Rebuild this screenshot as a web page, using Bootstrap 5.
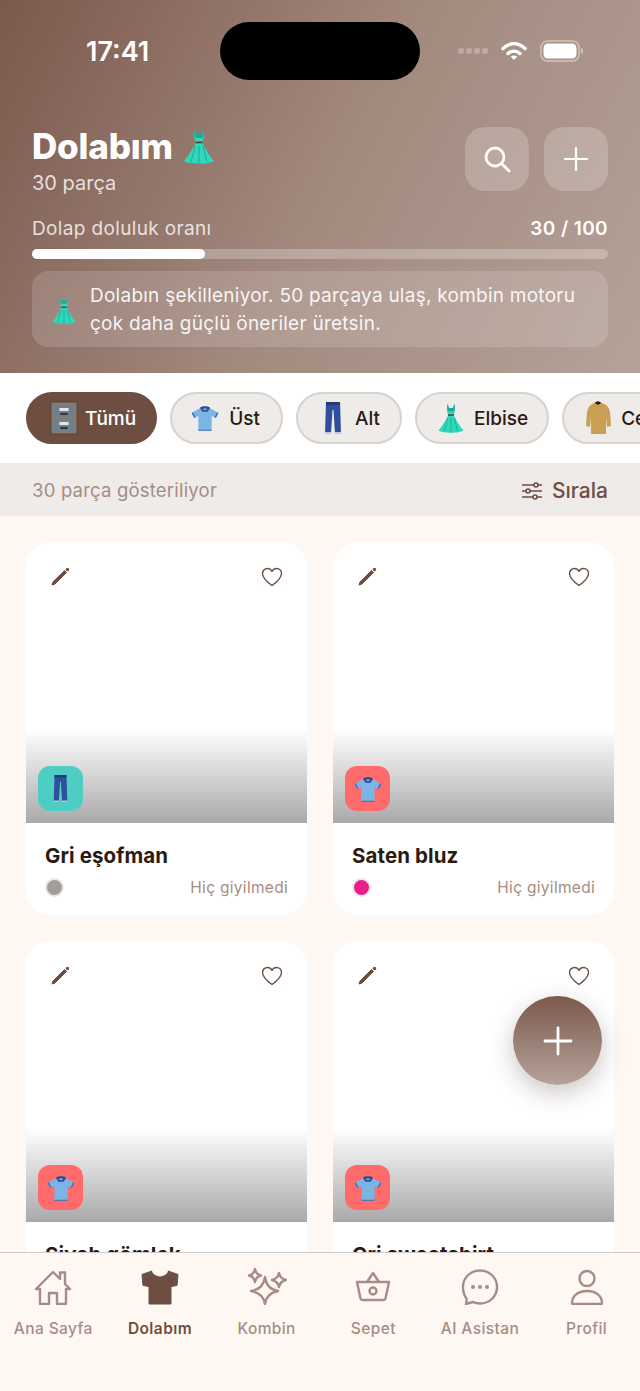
<!DOCTYPE html>
<html lang="tr">
<head>
  <meta charset="UTF-8" />
  <meta name="viewport" content="width=device-width, initial-scale=1.0" />
  <title>Dolabım</title>
  <link href="https://cdn.jsdelivr.net/npm/bootstrap@5.3.3/dist/css/bootstrap.min.css" rel="stylesheet" />
  <style>
    :root {
      --brown: #6f4e42;
      --brown-soft: #a58d84;
      --ink: #2c1a12;
      --cream: #fff8f2;
      --stone: #eeebe8;
    }
    html, body { height: 100%; }
    body { background: var(--cream); font-family: Inter, "Noto Sans", sans-serif; color: var(--ink); }
    .app { width: 640px; height: 1391px; overflow: hidden; }

    /* üst alan */
    .hero { height: 373px; flex: none; padding: 22px 32px 0; color: #fff; background: linear-gradient(118deg, #7c594d 0%, #a38a7f 52%, #b5a299 100%); }
    .status-row { height: 58px; margin: 0 -32px 47px; }
    .clock { width: 220px; padding-left: 86px; font-size: 27px; font-weight: 600; line-height: 1; }
    .island { width: 200px; height: 58px; background: #000; border-radius: 29px; }
    .status-right { flex: 1; padding-right: 56px; gap: 12px; }
    .signal { gap: 2px; }
    .signal i { width: 6px; height: 6px; border-radius: 2px; background: rgba(255,255,255,.25); display: block; }
    .title-row { height: 74px; margin-bottom: 16px; }
    .page-title { font-size: 35px; font-weight: 800; line-height: 40px; letter-spacing: -.2px; margin-top: -1px; }
    .page-sub { font-size: 20px; line-height: 24px; color: rgba(255,255,255,.8); margin-top: 5px; }
    .head-actions { gap: 15px; }
    .glass-btn { width: 64px; height: 64px; border: 0; border-radius: 20px; background: rgba(255,255,255,.2); }
    .fill-label { font-size: 19px; line-height: 24px; color: rgba(255,255,255,.8); letter-spacing: .35px; }
    .fill-count { font-size: 19px; font-weight: 600; line-height: 24px; letter-spacing: .4px; }
    .fill-track { height: 10px; margin: 8px 0 12px; border-radius: 5px; background: rgba(255,255,255,.25); }
    .fill-value { height: 100%; border-radius: 5px; background: #fff; }
    .tip-box { height: 76px; padding: 2px 24px 0 18px; gap: 12px; border-radius: 16px; background: rgba(255,255,255,.15); font-size: 19px; line-height: 28px; color: rgba(255,255,255,.92); letter-spacing: .25px; }

    /* kategori filtreleri */
    .chip-strip { height: 90px; flex: none; padding: 19px 0 0 26px; gap: 13px; background: #fff; overflow: hidden; }
    .chip { height: 52px; flex: none; border: 2px solid #d6d2ce; border-radius: 26px; background: var(--stone); font-size: 19px; font-weight: 500; color: var(--ink); }
    .chip span { margin-top: 3px; }
    .chip-all { padding: 0 19px 0 22px; gap: 7px; border-color: var(--brown); background: var(--brown); color: #fff; }
    .chip-top { padding: 0 21px 0 18px; gap: 9px; }
    .chip-bottom { padding: 0 20px 0 25px; gap: 12px; }
    .chip-dress { padding: 0 19px; gap: 8px; }
    .chip-coat { padding: 0 20px 0 21px; gap: 10px; }
    .count-bar { height: 53px; flex: none; padding: 3px 32px 0; background: var(--stone); }
    .count-text { font-size: 18.500px; color: var(--brown-soft); letter-spacing: .2px; }
    .sort-text { font-size: 21px; font-weight: 500; color: var(--brown); gap: 9px; }

    /* parça kartları */
    .wardrobe { flex: 1; min-height: 0; overflow: hidden; padding: 26px 26px 0; background: var(--cream); }
    .piece-grid { display: grid; grid-template-columns: 281px 281px; gap: 26px; }
    .piece { height: 373px; background: #fff; border-radius: 26px; overflow: hidden; }
    .piece-photo { height: 281px; padding: 24px 24px 0 23px; background: linear-gradient(to bottom, #fff 0, #fff 187px, #a9a9a9 281px); }
    .piece-tools { height: 22px; }
    .type-tag { position: absolute; left: 12px; bottom: 12px; width: 45px; height: 45px; border-radius: 12px; }
    .tag-teal { background: #4ecdc4; }
    .tag-coral { background: #ff6b6b; }
    .piece-name { font-size: 20.500px; font-weight: 700; line-height: 26px; padding: 20px 19px 0; letter-spacing: .1px; }
    .piece-meta { padding: 7px 19px 0; font-size: 15.500px; color: var(--brown-soft); letter-spacing: .3px; }
    .swatch { width: 19px; height: 19px; border-radius: 50%; border: 2px solid #e9e6e3; }
    .swatch-grey { background: #a29c9c; }
    .swatch-pink { background: #e91e8c; }
    .fab { position: absolute; left: 513px; top: 996px; width: 89px; height: 89px; border: 0; border-radius: 50%; background: linear-gradient(to bottom, #7c594d, #b5a299); box-shadow: 0 8px 24px rgba(70,50,40,.28); }

    /* alt menü */
    .tabbar { height: 139px; flex: none; padding-top: 15px; background: var(--cream); border-top: 1px solid #cfcbc9; position: relative; }
    .tab { width: calc(100% / 6); color: var(--brown-soft); font-size: 15.500px; font-weight: 500; letter-spacing: .4px; line-height: 20px; gap: 14px; }
    .tab-on { color: var(--brown); font-weight: 600; }
  </style>
</head>
<body>
<div class="app d-flex flex-column position-relative">

  <!-- başlık -->
  <header class="hero">
    <div class="status-row d-flex align-items-center">
      <div class="clock">17:41</div>
      <div class="island"></div>
      <div class="status-right d-flex align-items-center justify-content-end">
        <div class="signal d-flex"><i></i><i></i><i></i><i></i></div>
        <svg width="28" height="22" viewBox="0 0 28 22" fill="none" stroke="#fff" stroke-width="3.400" stroke-linecap="round"><path d="M3 8.500C10 2 18 2 25 8.500"/><path d="M8 13.500C11.500 10.300 16.500 10.300 20 13.500"/><path d="M14 20l-3.400-3.400c2-1.600 4.800-1.600 6.800 0z" fill="#fff" stroke="none"/></svg>
        <svg width="44" height="24" viewBox="0 0 44 24"><rect x="1" y="2" width="38" height="20" rx="6.500" fill="none" stroke="#fff" stroke-opacity=".45" stroke-width="1.500"/><rect x="3.500" y="4.500" width="33" height="15" rx="4.500" fill="#fff"/><path d="M41 9v6c1.400-.5 2-1.600 2-3s-.6-2.500-2-3z" fill="#fff" fill-opacity=".5"/></svg>
      </div>
    </div>

    <div class="title-row d-flex justify-content-between align-items-start">
      <div>
        <div class="page-title d-flex align-items-center gap-2">Dolabım
          <svg width="36" height="40" viewBox="0 0 36 40"><use href="#ic-dress"/></svg>
        </div>
        <div class="page-sub">30 parça</div>
      </div>
      <div class="head-actions d-flex">
        <button class="glass-btn d-flex align-items-center justify-content-center" type="button" aria-label="Ara">
          <svg width="30" height="30" viewBox="0 0 30 30" fill="none" stroke="#fff" stroke-width="2.800" stroke-linecap="round"><circle cx="13" cy="13" r="9"/><path d="M20 20l7 7"/></svg>
        </button>
        <button class="glass-btn d-flex align-items-center justify-content-center" type="button" aria-label="Ekle">
          <svg width="26" height="26" viewBox="0 0 26 26" stroke="#fff" stroke-width="2.200" stroke-linecap="round"><path d="M13 2v22M2 13h22"/></svg>
        </button>
      </div>
    </div>

    <div class="d-flex justify-content-between"><span class="fill-label">Dolap doluluk oranı</span><span class="fill-count">30 / 100</span></div>
    <div class="fill-track"><div class="fill-value" style="width:30%"></div></div>
    <div class="tip-box d-flex align-items-center">
      <svg width="28" height="34" viewBox="0 0 36 40" class="flex-shrink-0"><use href="#ic-dress"/></svg>
      <div>Dolabın şekilleniyor. 50 parçaya ulaş, kombin motoru çok daha güçlü öneriler üretsin.</div>
    </div>
  </header>

  <!-- kategoriler -->
  <div class="chip-strip d-flex">
    <div class="chip chip-all d-flex align-items-center"><svg width="28" height="34" viewBox="0 0 30 34" preserveAspectRatio="none"><use href="#ic-cabinet"/></svg><span>Tümü</span></div>
    <div class="chip chip-top d-flex align-items-center"><svg width="30" height="30" viewBox="0 0 36 36"><use href="#ic-shirt"/></svg><span>Üst</span></div>
    <div class="chip chip-bottom d-flex align-items-center"><svg width="20" height="34" viewBox="0 0 20 34"><use href="#ic-jeans"/></svg><span>Alt</span></div>
    <div class="chip chip-dress d-flex align-items-center"><svg width="30" height="36" viewBox="0 0 36 40"><use href="#ic-dress"/></svg><span>Elbise</span></div>
    <div class="chip chip-coat d-flex align-items-center"><svg width="26" height="36" viewBox="0 0 26 36"><use href="#ic-coat"/></svg><span>Ceket</span></div>
  </div>

  <div class="count-bar d-flex align-items-center justify-content-between">
    <span class="count-text">30 parça gösteriliyor</span>
    <span class="sort-text d-flex align-items-center">
      <svg width="22" height="20" viewBox="0 0 22 20" fill="#eeebe8" stroke="#6f4e42" stroke-width="1.600"><path d="M1 4h20M1 10h20M1 16h20"/><circle cx="15" cy="4" r="2"/><circle cx="7" cy="10" r="2"/><circle cx="14" cy="16" r="2"/></svg>
      Sırala
    </span>
  </div>

  <!-- parçalar -->
  <main class="wardrobe">
    <div class="piece-grid">
      <article class="piece">
        <div class="piece-photo position-relative">
          <div class="piece-tools d-flex justify-content-between">
            <svg width="22" height="22" viewBox="0 0 22 22"><use href="#ic-pen"/></svg>
            <svg width="22" height="22" viewBox="0 0 22 22"><use href="#ic-heart"/></svg>
          </div>
          <div class="type-tag tag-teal d-flex align-items-center justify-content-center"><svg width="17" height="29" viewBox="0 0 20 34"><use href="#ic-jeans"/></svg></div>
        </div>
        <div class="piece-name">Gri eşofman</div>
        <div class="piece-meta d-flex align-items-center justify-content-between"><span class="swatch swatch-grey"></span><span>Hiç giyilmedi</span></div>
      </article>
      <article class="piece">
        <div class="piece-photo position-relative">
          <div class="piece-tools d-flex justify-content-between">
            <svg width="22" height="22" viewBox="0 0 22 22"><use href="#ic-pen"/></svg>
            <svg width="22" height="22" viewBox="0 0 22 22"><use href="#ic-heart"/></svg>
          </div>
          <div class="type-tag tag-coral d-flex align-items-center justify-content-center"><svg width="30" height="30" viewBox="0 0 36 36"><use href="#ic-shirt"/></svg></div>
        </div>
        <div class="piece-name">Saten bluz</div>
        <div class="piece-meta d-flex align-items-center justify-content-between"><span class="swatch swatch-pink"></span><span>Hiç giyilmedi</span></div>
      </article>
      <article class="piece">
        <div class="piece-photo position-relative">
          <div class="piece-tools d-flex justify-content-between">
            <svg width="22" height="22" viewBox="0 0 22 22"><use href="#ic-pen"/></svg>
            <svg width="22" height="22" viewBox="0 0 22 22"><use href="#ic-heart"/></svg>
          </div>
          <div class="type-tag tag-coral d-flex align-items-center justify-content-center"><svg width="30" height="30" viewBox="0 0 36 36"><use href="#ic-shirt"/></svg></div>
        </div>
        <div class="piece-name">Siyah gömlek</div>
      </article>
      <article class="piece">
        <div class="piece-photo position-relative">
          <div class="piece-tools d-flex justify-content-between">
            <svg width="22" height="22" viewBox="0 0 22 22"><use href="#ic-pen"/></svg>
            <svg width="22" height="22" viewBox="0 0 22 22"><use href="#ic-heart"/></svg>
          </div>
          <div class="type-tag tag-coral d-flex align-items-center justify-content-center"><svg width="30" height="30" viewBox="0 0 36 36"><use href="#ic-shirt"/></svg></div>
        </div>
        <div class="piece-name">Gri sweatshirt</div>
      </article>
    </div>
  </main>

  <button class="fab d-flex align-items-center justify-content-center" type="button" aria-label="Parça ekle">
    <svg width="30" height="30" viewBox="0 0 30 30" stroke="#fff" stroke-width="2.800" stroke-linecap="round"><path d="M15 2v26M2 15h26"/></svg>
  </button>

  <!-- alt menü -->
  <nav class="tabbar d-flex">
    <div class="tab d-flex flex-column align-items-center">
      <svg width="40" height="37" viewBox="0 0 40 37" fill="none" stroke="#a58d84" stroke-width="2.400" stroke-linejoin="round" stroke-linecap="round"><path d="M3 21L20 4l7 7V4.500h5V16l5 5h-4v15h-9V25h-8v11H7V21z"/></svg>
      <span>Ana Sayfa</span>
    </div>
    <div class="tab tab-on d-flex flex-column align-items-center">
      <svg width="40" height="37" viewBox="0 0 40 37"><path d="M12 3c3 5 13 5 16 0l10 3.500-1 11-6 1V36H9V18.500l-6-1-1-11z" fill="#6f4e42" stroke="#6f4e42" stroke-linejoin="round"/><path d="M13 3c3 5.500 11 5.500 14 0" fill="none" stroke="#fff8f2" stroke-width="2.600"/></svg>
      <span>Dolabım</span>
    </div>
    <div class="tab d-flex flex-column align-items-center">
      <svg width="40" height="37" viewBox="0 0 40 37" fill="none" stroke="#a58d84" stroke-width="2.400" stroke-linejoin="round"><path d="M18 9Q19.500 21 31 23 19.500 25 18 36 16.500 25 4 23 16.500 21 18 9z"/><path d="M8 1Q9 6.500 14 7.500 9 8.500 8 14 7 8.500 2 7.500 7 6.500 8 1z"/><path d="M32 5Q33 10.500 39 12 33 13.500 32 19 31 13.500 25 12 31 10.500 32 5z"/></svg>
      <span>Kombin</span>
    </div>
    <div class="tab d-flex flex-column align-items-center">
      <svg width="40" height="37" viewBox="0 0 40 37" fill="none" stroke="#a58d84" stroke-width="2.400" stroke-linejoin="round"><path d="M4 14h32l-3.500 16.500a2 2 0 0 1-2 1.500H9.500a2 2 0 0 1-2-1.500z"/><path d="M14 14l6-9 6 9"/><circle cx="20" cy="23" r="3.500"/></svg>
      <span>Sepet</span>
    </div>
    <div class="tab d-flex flex-column align-items-center">
      <svg width="40" height="37" viewBox="0 0 40 37" fill="none" stroke="#a58d84" stroke-width="2.400" stroke-linejoin="round"><path d="M20 2.500c9.500 0 17 7.200 17 16.500s-7.500 16.500-17 16.500c-2.500 0-5-.5-7-1.500L6 36c.5-2 .8-3.500.5-5.500C4.200 27.500 3 23.500 3 19 3 9.700 10.500 2.500 20 2.500z"/><circle cx="13" cy="19" r="2" fill="#a58d84" stroke="none"/><circle cx="20" cy="19" r="2" fill="#a58d84" stroke="none"/><circle cx="27" cy="19" r="2" fill="#a58d84" stroke="none"/></svg>
      <span>AI Asistan</span>
    </div>
    <div class="tab d-flex flex-column align-items-center">
      <svg width="40" height="37" viewBox="0 0 40 37" fill="none" stroke="#a58d84" stroke-width="2.400" stroke-linejoin="round"><circle cx="20" cy="10.500" r="7.500"/><path d="M5 35c0-7 6-12 15-12s15 5 15 12a1 1 0 0 1-1 1H6a1 1 0 0 1-1-1z"/></svg>
      <span>Profil</span>
    </div>
  </nav>
</div>

<!-- kıyafet simgeleri -->
<svg width="0" height="0" class="position-absolute">
  <defs>
    <g id="ic-dress">
      <path d="M14 3l1.500 5h5L22 3l1 7-1.500 7c3 6 7.500 14 11.500 18-4 3.500-26 3.500-30 0 4-4 8.500-12 11.500-18L13 10z" fill="#2fd8bb"/>
      <path d="M14 3l1.500 5h5L22 3l.6 4-1 5h-7.200l-1-5z" fill="#1fa898"/>
      <path d="M14.500 15.500h7v1.800h-7z" fill="#5a3b3b"/>
      <path d="M10 36l4-16M18 37.500V20M26 36l-4-16" stroke="#1fa898" stroke-width="1" fill="none"/>
    </g>
    <g id="ic-shirt">
      <path d="M12 6l6 2 6-2 10 6-3 6-5-2.500V33H10V15.500L5 18l-3-6z" fill="#7db4e6"/>
      <path d="M12 6c0-3 12-3 12 0l-3 4.500h-6z" fill="#2c4c8e"/>
      <path d="M16 6.500h4v2h-4z" fill="#7db4e6"/>
      <path d="M2 12l3 6 1.500-.8-3-6zM34 12l-3 6-1.500-.8 3-6zM10 32h16v1.200H10z" fill="#3d6fb5"/>
    </g>
    <g id="ic-jeans">
      <path d="M3 1h14l1 32h-6l-1.500-24h-1L8 33H2z" fill="#2d4f9e"/>
      <path d="M3 1h14v3H3z" fill="#203a7a"/>
      <path d="M2 31h6v2H2zM12 31h6v2h-6z" fill="#b9cbe8"/>
    </g>
    <g id="ic-coat">
      <path d="M9 3c2-2 6-2 8 0 4 1 7 4 8 9l1 14-4 1-1-10v17H6V17L5 27l-4-1 1-14c1-5 4-8 7-9z" fill="#c9a052"/>
      <path d="M10 3c1-2 5-2 6 0l-3 2z" fill="#2c1a12"/>
    </g>
    <g id="ic-cabinet">
      <rect x="1" y="1" width="28" height="32" fill="#8d7a6e" stroke="#4e4038"/>
      <rect x="4" y="4" width="22" height="12" fill="#6c8092"/>
      <rect x="4" y="18" width="22" height="12" fill="#6c8092"/>
      <rect x="10" y="7" width="10" height="3" fill="#e9e4df"/>
      <rect x="10" y="21" width="10" height="3" fill="#e9e4df"/>
      <rect x="11" y="12" width="8" height="2" fill="#3d332d"/>
      <rect x="11" y="26" width="8" height="2" fill="#3d332d"/>
    </g>
    <g id="ic-pen">
      <path d="M3 19l1-3L15.500 4.500l2 2L6 18z" fill="#6f4e42" stroke="#6f4e42" stroke-linejoin="round"/>
      <circle cx="18.500" cy="3.500" r="1.700" fill="#6f4e42"/>
    </g>
    <g id="ic-heart">
      <path d="M11 19.500C4 14.500 1.500 11 1.500 7.500 1.500 4.500 3.800 2.500 6.500 2.500c2 0 3.500 1 4.500 2.800 1-1.800 2.500-2.800 4.500-2.800 2.700 0 5 2 5 5 0 3.500-2.500 7-9.500 12z" fill="none" stroke="#6f4e42" stroke-width="1.400" stroke-linejoin="round"/>
    </g>
  </defs>
</svg>
<script src="https://cdn.jsdelivr.net/npm/bootstrap@5.3.3/dist/js/bootstrap.bundle.min.js"></script>
</body>
</html>
